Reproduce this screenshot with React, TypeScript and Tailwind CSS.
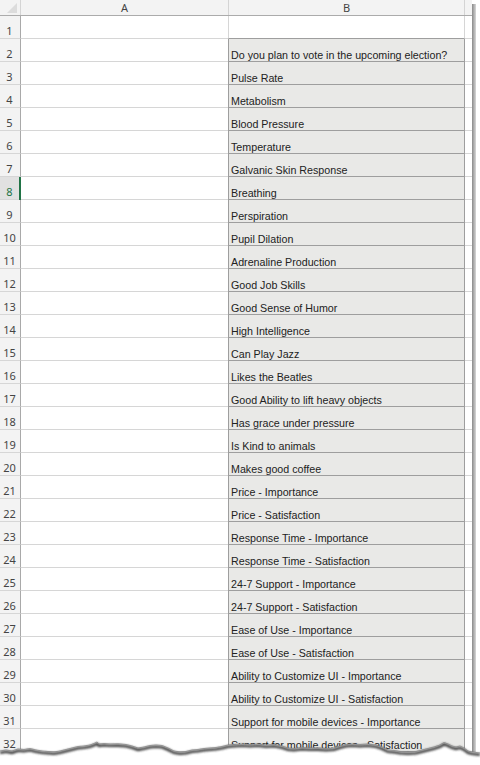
import React from 'react';

const items = [
  '',
  'Do you plan to vote in the upcoming election?',
  'Pulse Rate',
  'Metabolism',
  'Blood Pressure',
  'Temperature',
  'Galvanic Skin Response',
  'Breathing',
  'Perspiration',
  'Pupil Dilation',
  'Adrenaline Production',
  'Good Job Skills',
  'Good Sense of Humor',
  'High Intelligence',
  'Can Play Jazz',
  'Likes the Beatles',
  'Good Ability to lift heavy objects',
  'Has grace under pressure',
  'Is Kind to animals',
  'Makes good coffee',
  'Price - Importance',
  'Price - Satisfaction',
  'Response Time - Importance',
  'Response Time - Satisfaction',
  '24-7 Support - Importance',
  '24-7 Support - Satisfaction',
  'Ease of Use - Importance',
  'Ease of Use - Satisfaction',
  'Ability to Customize UI - Importance',
  'Ability to Customize UI - Satisfaction',
  'Support for mobile devices - Importance',
  'Support for mobile devices - Satisfaction',
];

// jagged tear line along the bottom, in page coordinates
const tear =
  'M0 751 L6 750 L12 751 L18 749 L24 749.5 L30 748.5 L36 750 L42 751 L48 751.5 L54 752 L60 751 L66 749.5 L72 748 L78 746.5 L84 746 L90 745 L94 743.5 L97 742 L99 744 L104 743.5 L110 744 L118 743.8 L126 744.5 L132 746 L138 748 L144 747 L150 745.5 L156 745 L162 745.5 L168 748 L174 751 L180 752 L186 751.5 L192 750 L198 749.5 L204 748.5 L210 748 L216 747.5 L222 746.5 L228 745 L234 744.5 L242 744 L250 744.5 L258 744 L266 745 L274 744.5 L282 746 L288 748 L294 748.5 L302 747.5 L310 748 L318 747.8 L326 748.5 L334 748 L340 746 L346 744.5 L352 744 L360 744.5 L368 744 L376 745 L382 747 L388 750 L394 750.5 L400 751.5 L408 752 L416 751.5 L422 750 L428 748.5 L434 747 L440 745 L444 742.5 L448 744 L452 746 L456 747 L460 746 L464 748 L468 751 L472 752 L476 752.5 L480 753';

function RowHead({ n }: { n: number }) {
  const active = n === 8;
  return (
    <div
      className={`relative w-[21px] shrink-0 flex items-end justify-center pb-[1px] leading-[13px] border-r border-b border-r-[#a9a9a9] border-b-[#d6d6d6] text-[11px] ${
        active ? 'bg-[#e1e1e1] text-[#217346]' : 'bg-[#f3f3f3] text-[#444]'
      }`}
      style={{ fontFamily: '"Noto Sans", "Open Sans", sans-serif' }}
    >
      <span className="pr-[1px]">{n}</span>
      {active && <div className="absolute right-[-1px] top-0 bottom-[-1px] w-[2px] bg-[#217346]" />}
    </div>
  );
}

export default function App() {
  return (
    <div className="relative w-[480px] h-[765px] bg-white overflow-hidden">
      <div className="flex">
        <div className="w-[472px] h-[765px] overflow-hidden bg-white">
          {/* column headers */}
          <div
            className="flex h-[16px] bg-[#f3f3f3] border-b border-[#ababab] text-[11px] text-[#444]"
            style={{ fontFamily: '"Noto Sans", "Open Sans", sans-serif' }}
          >
            <div className="relative w-[21px] shrink-0 border-r border-[#d4d4d4]">
              <svg className="absolute right-[3px] bottom-[2px]" width="10" height="10" viewBox="0 0 10 10">
                <polygon points="10,0 10,10 0,10" fill="#dcdcdc" />
              </svg>
            </div>
            <div className="w-[208px] shrink-0 border-r border-[#d4d4d4] flex items-center justify-center leading-none">
              A
            </div>
            <div className="w-[236px] shrink-0 border-r border-[#d4d4d4] flex items-center justify-center leading-none">
              B
            </div>
            <div className="flex-1" />
          </div>

          {items.map((text, i) => {
            const n = i + 1;
            const filled = n >= 2;
            return (
              <div key={n} className="flex h-[23px]">
                <RowHead n={n} />
                <div className="w-[207px] shrink-0 border-b border-[#d6d6d6]" />
                <div
                  className={`w-[237px] shrink-0 border-l flex items-end pl-[2px] text-[10.7px] leading-[12px] text-[#222] whitespace-nowrap overflow-hidden ${
                    filled
                      ? 'bg-[#e9e9e7] border-[#9e9e9e] border-r border-b'
                      : 'bg-white border-l-[#d6d6d6] border-b border-b-[#9e9e9e] border-r border-r-[#d6d6d6]'
                  }`}
                  style={{ fontFamily: '"Liberation Sans", Arial, sans-serif' }}
                >
                  {text}
                </div>
                <div className="flex-1 border-b border-[#d6d6d6]" />
              </div>
            );
          })}
        </div>
        {/* window shadow on the right */}
        <div className="w-[4px] h-[748px] mt-[4px] bg-gradient-to-r from-[#8a8a8a] to-[#d8d8d8]" />
      </div>

      {/* torn bottom edge */}
      <svg className="absolute left-0 top-0" width="480" height="765" viewBox="0 0 480 765">
        <defs>
          <filter id="tearShadow" x="-5%" y="-50%" width="110%" height="200%">
            <feGaussianBlur stdDeviation="1.1" />
          </filter>
        </defs>
        <path d={`${tear} L480 765 L0 765 Z`} fill="#ffffff" />
        <path
          d={tear}
          transform="translate(0 1.8)"
          fill="none"
          stroke="#3a3a3a"
          strokeWidth="2.6"
          filter="url(#tearShadow)"
        />
        <path d={tear} fill="none" stroke="#8a8a8a" strokeWidth="0.8" />
      </svg>
    </div>
  );
}
